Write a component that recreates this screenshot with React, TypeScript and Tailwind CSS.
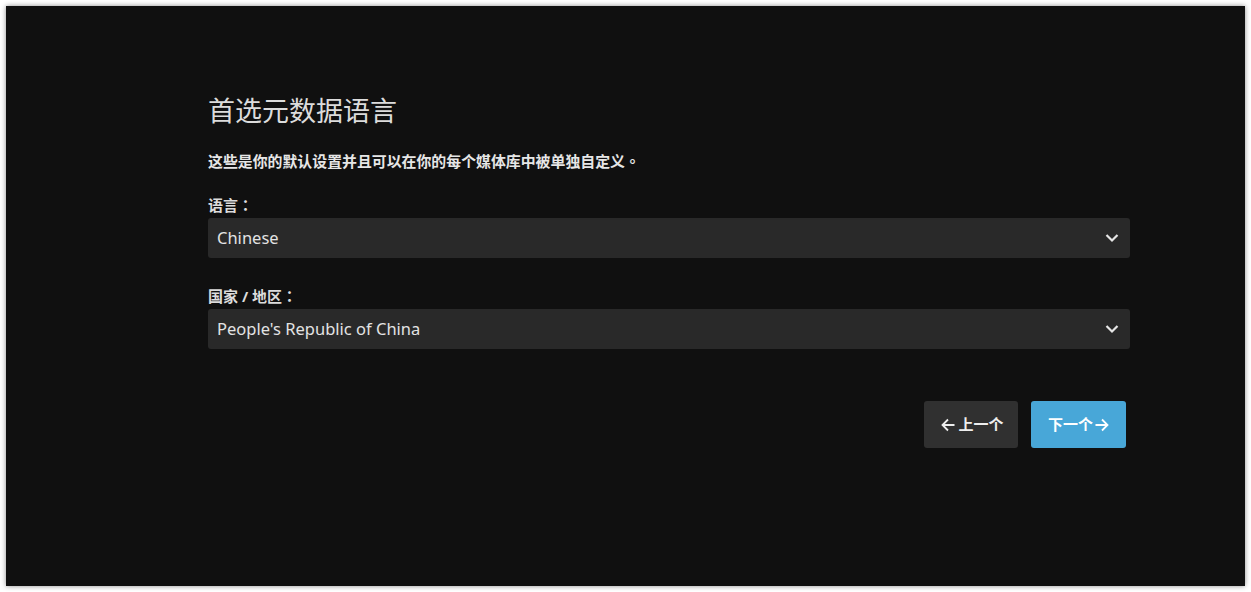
import React from "react";

const font = { fontFamily: '"Noto Sans", "Noto Sans CJK TC", sans-serif' };

function Chevron() {
  return (
    <svg width="14" height="10" viewBox="0 0 14 10" className="shrink-0">
      <path d="M1.5 2 L7 7.5 L12.5 2" fill="none" stroke="#e6e6e6" strokeWidth="2.2" />
    </svg>
  );
}

function ArrowLeft() {
  return (
    <svg width="14" height="14" viewBox="0 0 14 14">
      <path d="M13.5 7 H1.5 M7 1.5 L1.5 7 L7 12.5" fill="none" stroke="#eeeeee" strokeWidth="1.8" />
    </svg>
  );
}

function ArrowRight() {
  return (
    <svg width="14" height="14" viewBox="0 0 14 14">
      <path d="M0.5 7 H12.5 M7 1.5 L12.5 7 L7 12.5" fill="none" stroke="#ffffff" strokeWidth="1.8" />
    </svg>
  );
}

function Select({ value }: { value: string }) {
  return (
    <div className="h-[40px] w-full rounded-[3px] bg-[#292929] flex items-center justify-between pl-[9px] pr-[11px]">
      <span className="text-[16.5px] text-[#e3e3e3]">{value}</span>
      <Chevron />
    </div>
  );
}

export default function App() {
  return (
    <div className="w-[1251px] h-[592px] bg-white p-[6px] pr-[6px]" style={font}>
      <div className="w-[1239px] h-[580px] bg-[#101010] shadow-[0_0_5px_rgba(0,0,0,0.45)] pt-[86px]">
        <div className="ml-[202px] w-[922px] flex flex-col">
          <h1 className="text-[27px] leading-[38px] text-[#dcdcdc] font-normal">首选元数据语言</h1>
          <p className="mt-[21px] text-[14.9px] leading-[20px] font-bold text-[#e6e6e6]">
            这些是你的默认设置并且可以在你的每个媒体库中被单独自定义。
          </p>
          <label className="mt-[24px] text-[15px] leading-[20px] font-bold text-[#dcdcdc]">语言：</label>
          <div className="mt-[3px]">
            <Select value="Chinese" />
          </div>
          <label className="mt-[28px] text-[15px] leading-[20px] font-bold text-[#dcdcdc]">国家 / 地区：</label>
          <div className="mt-[3px]">
            <Select value="People's Republic of China" />
          </div>
          <div className="mt-[52px] flex justify-end gap-[13px] pr-[4px]">
            <button className="h-[47px] w-[94px] rounded-[3px] bg-[#303030] flex items-center justify-center gap-[3px] pl-[3px] text-[15px] font-bold text-[#eeeeee]">
              <ArrowLeft />
              <span>上一个</span>
            </button>
            <button className="h-[47px] w-[95px] rounded-[3px] bg-[#48a7d8] flex items-center justify-center gap-[2px] text-[15px] font-bold text-white">
              <span>下一个</span>
              <ArrowRight />
            </button>
          </div>
        </div>
      </div>
    </div>
  );
}
